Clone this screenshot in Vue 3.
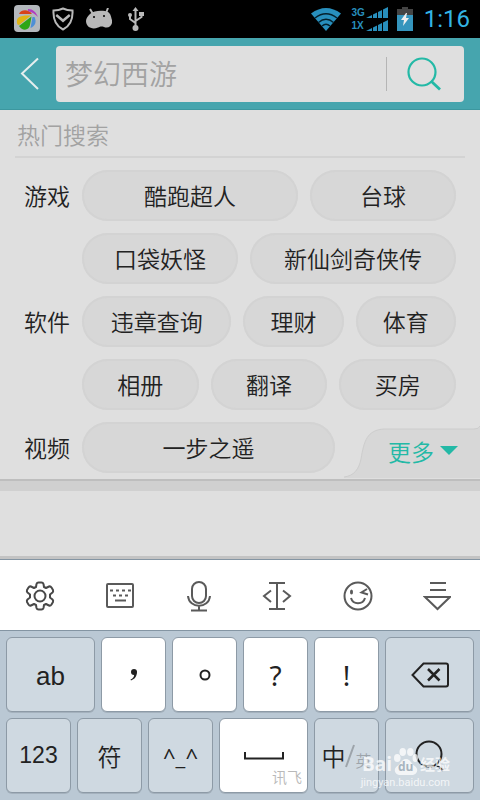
<script setup>
const groups = [
  {
    name: '游戏',
    rows: [
      [{ text: '酷跑超人', grow: 216 }, { text: '台球', grow: 146 }],
      [{ text: '口袋妖怪', grow: 156 }, { text: '新仙剑奇侠传', grow: 206 }],
    ],
  },
  {
    name: '软件',
    rows: [
      [{ text: '违章查询', grow: 149 }, { text: '理财', grow: 100 }, { text: '体育', grow: 100 }],
      [{ text: '相册', grow: 117 }, { text: '翻译', grow: 117 }, { text: '买房', grow: 117 }],
    ],
  },
  { name: '视频', rows: [[{ text: '一步之遥', grow: 253 }, { text: '', grow: 109 }]] },
]
</script>

<template>
  <div class="screen">
    <div class="status">
      <div class="status-left">
        <svg width="26" height="28" viewBox="0 0 26 28" aria-hidden="true">
          <rect width="26" height="27" y="0" rx="4" fill="#b4b8bd" />
          <path d="M5 9C6 5 14 3 18 9Z" fill="#d8421a" />
          <path d="M14 4C19 4 22 7 24 12C21 9 18 7 14 6Z" fill="#b13cc0" />
          <path d="M3 18C2 12 6 10 17 10.500L5 20Q3 20 3 18Z" fill="#e0b414" />
          <path d="M17.500 11.500L5 21C8 26 15 26 16 20Z" fill="#2da616" />
          <path d="M18.500 12L16.500 23C21 21 23 17 20.500 12Z" fill="#4e8fd6" />
        </svg>
        <svg class="shield" width="22" height="24" viewBox="0 0 22 24" aria-hidden="true">
          <path d="M11 1.500C14 3 17 3.500 20.500 3.500C21 12 18 19 11 22.500C4 19 1 12 1.500 3.500C5 3.500 8 3 11 1.500Z" fill="none" stroke="#b9b9b9" stroke-width="2" />
          <path d="M5 7L11 12L17 7L18.500 9L11 15.500L3.500 9Z" fill="#b9b9b9" />
        </svg>
        <svg class="droid" width="26" height="22" viewBox="0 0 26 22" aria-hidden="true">
          <path d="M4 1L7 6M22 0L20 5" stroke="#b9b9b9" stroke-width="2" />
          <path d="M4 6C8 2 18 2 22 4C25 6 25 9 26 12C27 17 23 21 18 19C15 18 14 19 12 19.500C6 22 0 19 0 13C0 10 2 8 4 6Z" fill="#b9b9b9" />
          <circle cx="8" cy="9" r="1" fill="#000" /><circle cx="18" cy="8" r="1" fill="#000" />
        </svg>
        <svg class="usb" width="18" height="26" viewBox="0 0 18 26" aria-hidden="true">
          <path d="M8.500 4V22M8.500 17L3 13V9M8.500 15L14.500 11V8" fill="none" stroke="#b9b9b9" stroke-width="2" />
          <path d="M8.500 1L11.500 5H5.500Z" fill="#b9b9b9" />
          <circle cx="8.500" cy="22" r="3" fill="#b9b9b9" /><circle cx="3" cy="9" r="2" fill="#b9b9b9" />
          <rect x="12" y="6" width="5" height="4" fill="#b9b9b9" />
        </svg>
      </div>
      <div class="status-right">
        <svg width="32" height="24" viewBox="0 0 32 24" aria-hidden="true">
          <path d="M1 6.500Q16 -4.500 31 6.500L16 24Z" fill="#288fbd" />
          <path d="M5 11Q16 2.500 27 11M8.500 15.500Q16 9 23.500 15.500M12 19Q16 15.500 20 19" stroke="#04202c" stroke-width="1.500" fill="none" />
        </svg>
        <div class="nets"><span>3G</span><span>1X</span></div>
        <svg class="bars" width="22" height="26" viewBox="0 0 22 26" aria-hidden="true">
          <path d="M0 12L22 1V12ZM0 25L22 14V25Z" fill="#288fbd" />
          <path d="M6.500 0V26M11.500 0V26M16.500 0V26" stroke="#000" stroke-width="1" />
        </svg>
        <svg class="battery" width="16" height="24" viewBox="0 0 16 24" aria-hidden="true">
          <path d="M5 0H11V2H16V9H0V2H5Z" fill="#444" />
          <rect y="8" width="16" height="16" fill="#3595bd" />
          <path d="M9 6L4 13H7L6 19L12 11H9L10 6Z" fill="#eee" />
        </svg>
        <time class="clock">1:16</time>
      </div>
    </div>

    <header class="header">
      <button class="back" aria-label="返回">
        <svg width="20" height="34" viewBox="0 0 20 34"><path d="M18 1.500L2 16.500L18 32" fill="none" stroke="#e6eeee" stroke-width="2" /></svg>
      </button>
      <form class="search" @submit.prevent>
        <input type="text" placeholder="梦幻西游" aria-label="搜索" />
        <button class="go" aria-label="搜索">
          <svg width="36" height="36" viewBox="0 0 36 36"><g fill="none" stroke="#23b9a6"><circle cx="17" cy="16" r="13.500" stroke-width="2.200" /><path d="M26 25L35 33.500" stroke-width="2.800" /></g></svg>
        </button>
      </form>
    </header>

    <main class="panel">
      <h2>热门搜索</h2>
      <section v-for="g in groups" :key="g.name" class="group">
        <h3>{{ g.name }}</h3>
        <div class="rows">
          <div v-for="(row, i) in g.rows" :key="i" class="row">
            <template v-for="(tag, j) in row" :key="j">
              <button v-if="tag.text" class="pill" :style="{ flexGrow: tag.grow }">{{ tag.text }}</button>
              <span v-else class="spacer" :style="{ flexGrow: tag.grow }"></span>
            </template>
          </div>
        </div>
      </section>
      <button class="more">
        <svg class="more-bg" width="136" height="53" viewBox="0 0 136 53" aria-hidden="true">
          <path d="M0 51C10 50 15 43 17 33C20 15 23 4 40 3H130Q135 3 136 0V52H0Z" fill="#d7d7d7" />
          <path d="M0 51C10 50 15 43 17 33C20 15 23 4 40 3H130Q135 3 136 0" fill="none" stroke="#cdcdcd" />
        </svg>
        <span>更多</span>
        <svg width="18" height="9" viewBox="0 0 18 9" aria-hidden="true"><path d="M0 0H18L9 9Z" fill="#23b9a6" /></svg>
      </button>
    </main>
    <div class="band"></div>

    <div class="keyboard">
      <div class="tools">
        <button aria-label="设置">
          <svg width="30" height="30" viewBox="0 0 30 30" fill="none" stroke="#484848" stroke-width="2" stroke-linejoin="round">
            <path d="M11.500 3Q12 1.500 13.500 1.500H16.500Q18 1.500 18.500 3L19 6L21 7L24 5.500Q25.500 5 26.500 6.500L28 9Q28.500 10.500 27.500 11.500L25 13.500V16.500L27.500 18.500Q28.500 19.500 28 21L26.500 23.500Q25.500 25 24 24.500L21 23L19 24L18.500 27Q18 28.500 16.500 28.500H13.500Q12 28.500 11.500 27L11 24L9 23L6 24.500Q4.500 25 3.500 23.500L2 21Q1.500 19.500 2.500 18.500L5 16.500V13.500L2.500 11.500Q1.500 10.500 2 9L3.500 6.500Q4.500 5 6 5.500L9 7L11 6Z" />
            <circle cx="15" cy="15" r="5.500" />
          </svg>
        </button>
        <button aria-label="键盘">
          <svg width="30" height="30" viewBox="0 0 30 30" fill="none" stroke="#5a5a5a" stroke-width="2">
            <rect x="2" y="3" width="26" height="23" rx="1" />
            <path d="M5 9.500H26" stroke-dasharray="3 3" /><path d="M8 14.500H24" stroke-dasharray="3 3" /><path d="M10 19.500H21" />
          </svg>
        </button>
        <button aria-label="语音">
          <svg width="26" height="32" viewBox="0 0 26 32" fill="none" stroke="#5a5a5a" stroke-width="2">
            <rect x="6" y="2" width="14" height="21" rx="7" />
            <path d="M2 16C3 29 23 29 24 16M13 26V30M5 30.500H21" />
          </svg>
        </button>
        <button aria-label="移动光标">
          <svg width="30" height="30" viewBox="0 0 30 30" fill="none" stroke="#5a5a5a" stroke-width="2">
            <path d="M7 2H23M7 28H23M15 2V28M9 9.500L2 15L9 21M21 9.500L28 15L21 21" />
          </svg>
        </button>
        <button aria-label="表情">
          <svg width="30" height="30" viewBox="0 0 30 30" fill="none" stroke="#5a5a5a" stroke-width="2">
            <circle cx="15" cy="15" r="13.500" />
            <path d="M8 17C10 24 20 24 22 17M24 8L18.500 11.500L25 13.500" />
            <ellipse cx="8.500" cy="11" rx="1.500" ry="2.500" fill="#5a5a5a" stroke="none" />
          </svg>
        </button>
        <button aria-label="收起">
          <svg width="28" height="30" viewBox="0 0 28 30" fill="none" stroke="#5a5a5a" stroke-width="2">
            <path d="M7 2H23M7 9H23M2 16H27L14.500 28Z" />
          </svg>
        </button>
      </div>
      <div class="keys">
        <div class="key-row">
          <button class="key wide latin">ab</button>
          <button class="key white" aria-label="逗号">
            <svg width="10" height="14" viewBox="0 0 10 14"><circle cx="5" cy="4" r="3" fill="#222" /><path d="M7.500 3C8.500 8 6 11 2 12.500L1.500 11.500C5 10 5.500 7.500 5 5Z" fill="#222" /></svg>
          </button>
          <button class="key white" aria-label="句号">
            <svg width="12" height="12" viewBox="0 0 12 12"><circle cx="6" cy="6" r="4.500" fill="none" stroke="#222" stroke-width="2" /></svg>
          </button>
          <button class="key white mark">?</button>
          <button class="key white mark">!</button>
          <button class="key wide" aria-label="删除">
            <svg width="38" height="26" viewBox="0 0 38 26" fill="none" stroke="#222" stroke-width="2"><path d="M12.500 1.500H35Q37 1.500 37 3.500V22.500Q37 24.500 35 24.500H12.500L1.500 13Z" /><path d="M17 7L28.500 18.500M28.500 7L17 18.500" stroke-width="2.500" /></svg>
          </button>
        </div>
        <div class="key-row">
          <button class="key num">123</button>
          <button class="key han">符</button>
          <button class="key face">^_^</button>
          <button class="key wide white space" aria-label="空格">
            <svg width="40" height="8" viewBox="0 0 40 8"><path d="M1 0V6.500H39V0" fill="none" stroke="#222" stroke-width="2" /></svg>
            <span class="brand">讯飞</span>
          </button>
          <button class="key lang"><span>中</span><svg width="10" height="24" viewBox="0 0 10 24" aria-hidden="true"><path d="M9 1L1 23" stroke="#9da4aa" stroke-width="2" /></svg><small>英</small></button>
          <button class="key wide" aria-label="搜索">
            <svg width="30" height="32" viewBox="0 0 30 32" fill="none" stroke="#222" stroke-width="2"><circle cx="14" cy="14" r="12.500" /><path d="M21 24.500L28 30.500" /></svg>
          </button>
        </div>
      </div>
      <div class="watermark">
        <div class="wm-name">
          <span>Bai</span>
          <span class="paw">
            <svg width="24" height="29" viewBox="0 0 22 29" preserveAspectRatio="none" aria-hidden="true"><g fill="#fff"><ellipse cx="3" cy="11" rx="3" ry="4" /><ellipse cx="8" cy="5" rx="3" ry="4" /><ellipse cx="15" cy="5" rx="3" ry="4" /><ellipse cx="19.500" cy="11" rx="2.500" ry="4" /><path d="M11 12C15 12 16 17 19 19C24 23 20 29 15 28H7C2 29 -2 23 3 19C6 17 7 12 11 12Z" /></g></svg>
            <em>du</em>
          </span>
          <span class="wm-han">经验</span>
        </div>
        <div class="wm-url">jingyan.baidu.com</div>
      </div>
    </div>
  </div>
</template>

<style>
body {
  background: #dfdfdf;
}
</style>

<style scoped>
.screen {
  min-height: 100vh;
  display: flex;
  flex-direction: column;
  background: #dfdfdf;
  color: #222;
  font-family: "Noto Sans CJK SC", sans-serif;
  font-weight: 350;
}
.screen * {
  box-sizing: border-box;
}
button,
input {
  margin: 0;
  padding: 0;
  border: 0;
  background: none;
  color: inherit;
  font: inherit;
}
svg {
  display: block;
  flex: none;
}
.status {
  height: 38px;
  padding: 0 10px 0 14px;
  background: #000;
  display: flex;
  justify-content: space-between;
}
.status-left,
.status-right {
  display: flex;
  align-items: center;
}
.status-left {
  gap: 12px;
}
.droid {
  margin-right: 3px;
}
.nets {
  margin-left: 9px;
  display: flex;
  flex-direction: column;
  font: bold 10px/13px "Liberation Sans", sans-serif;
  color: #288fbd;
}
.bars {
  margin-left: 1px;
}
.battery {
  margin-left: 9px;
}
.clock {
  margin-left: 11px;
  font: 24px/38px Roboto, sans-serif;
  color: #33b5e5;
}
.header {
  height: 72px;
  padding: 8px 16px 8px 0;
  display: flex;
  background: #46a5ae;
  border-bottom: 1px solid #3c979f;
}
.back {
  width: 56px;
  padding-left: 20px;
}
.search {
  flex: 1;
  min-width: 0;
  height: 56px;
  display: flex;
  align-items: center;
  background: #dfdfdf;
  border-radius: 4px;
}
.search input {
  flex: 1;
  min-width: 0;
  height: 56px;
  padding: 0 0 2px 9px;
  font-size: 28px;
  outline: 0;
}
.search input::placeholder {
  color: #a2a2a2;
  opacity: 1;
}
.go {
  width: 78px;
  height: 34px;
  display: flex;
  align-items: center;
  padding-left: 18px;
  border-left: 1px solid #b5b5b5;
}
.panel {
  position: relative;
  padding: 0 24px 6px;
  display: flex;
  flex-direction: column;
  gap: 12px;
}
h2,
h3 {
  margin: 0;
  font-size: 23px;
  font-weight: inherit;
}
h2 {
  height: 48px;
  margin: 0 -9px;
  padding-left: 2px;
  line-height: 48px;
  color: #a2a2a2;
  border-bottom: 2px solid #d3d3d3;
}
.group {
  display: flex;
}
h3 {
  width: 58px;
  line-height: 50px;
}
.rows {
  flex: 1;
  display: flex;
  flex-direction: column;
  gap: 12px;
}
.row {
  display: flex;
  gap: 12px;
}
.pill,
.spacer {
  flex: 1 1 0;
  min-width: 0;
}
.pill {
  height: 51px;
  padding-bottom: 2px;
  box-shadow: inset 0 0 0 2px #d3d3d3;
  border-radius: 26px;
  background: #d7d7d7;
  font-size: 23px;
  line-height: 48px;
  white-space: nowrap;
}
.more {
  position: absolute;
  right: 0;
  bottom: 0;
  width: 136px;
  height: 53px;
  padding: 0 0 4px 44px;
  display: flex;
  align-items: center;
  gap: 6px;
  color: #23b9a6;
  font-size: 23px;
}
.more-bg {
  position: absolute;
  right: 0;
  bottom: 0;
}
.more > :not(.more-bg) {
  position: relative;
}
.band {
  height: 12px;
  background: #d0d0d0;
  border-top: 2px solid #bebebe;
}
.keyboard {
  position: relative;
  margin-top: auto;
  border-top: 3px solid #c3c3c3;
}
.tools {
  height: 71px;
  padding: 2px 29px 0 25px;
  display: flex;
  justify-content: space-between;
  background: #fff;
  border-top: 1px solid #8495a3;
}
.tools button {
  display: flex;
  align-items: center;
  justify-content: center;
}
.keys {
  padding: 6px 6px 7px;
  display: flex;
  flex-direction: column;
  gap: 6px;
  background: #bac8d4;
  border-top: 1px solid #8495a3;
}
.key-row {
  display: flex;
  gap: 6px;
}
.key {
  flex: 63 1 0;
  min-width: 0;
  height: 75px;
  display: flex;
  align-items: center;
  justify-content: center;
  background: #cfd9e1;
  border: 1px solid #8d9aa6;
  border-radius: 6px;
  box-shadow: 0 1px 0 #a4b1bd;
}
.wide {
  flex-grow: 87;
}
.white {
  background: #fff;
}
.latin {
  padding-top: 4px;
  font: 26px "Liberation Sans", sans-serif;
}
.num {
  font: 23px "Liberation Sans", sans-serif;
}
.mark {
  font: 28px "Noto Sans", sans-serif;
}
.face {
  font: 22px "Noto Sans", sans-serif;
}
.han {
  font-size: 24px;
}
.space {
  position: relative;
}
.brand {
  position: absolute;
  right: 5px;
  bottom: 4px;
  font-size: 15px;
  line-height: 22px;
  color: #b9b9b9;
}
.lang {
  font-size: 24px;
}
.lang small {
  padding-top: 8px;
  font-size: 16px;
  color: #9da4aa;
}
.watermark {
  position: absolute;
  right: 30px;
  bottom: 10px;
  color: #fff;
  opacity: 0.75;
  pointer-events: none;
}
.wm-name {
  display: flex;
  align-items: flex-end;
  justify-content: flex-end;
  gap: 2px;
  font: bold 19px/24px "Open Sans", sans-serif;
}
.paw {
  position: relative;
}
.paw em {
  position: absolute;
  left: 4px;
  bottom: 0;
  font: bold 12px/18px "Open Sans", sans-serif;
  color: #9aa8b4;
}
.wm-han {
  font: bold 15px/24px "Noto Sans CJK SC", sans-serif;
}
.wm-url {
  font: 11px/14px Roboto, sans-serif;
  text-align: right;
}
</style>
